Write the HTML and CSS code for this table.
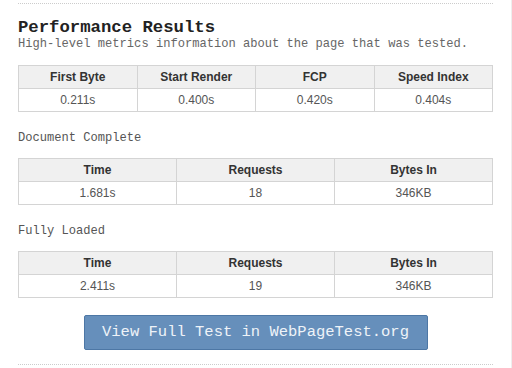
FILE: index.html
```html
<!DOCTYPE html>
<html lang="en">
<head>
    <meta charset="UTF-8">
    <meta name="viewport" content="width=device-width, initial-scale=1.0">
    <title>Performance Results</title>

    <link rel="stylesheet" href="styles.css">
</head>
<body>

    <div class="page">

        <hr class="rule">

        <h2 class="title">Performance Results</h2>
        <p class="subtitle">High-level metrics information about the page that was tested.</p>

        <table class="metrics">
            <tr>
                <th>First Byte</th>
                <th>Start Render</th>
                <th>FCP</th>
                <th>Speed Index</th>
            </tr>
            <tr>
                <td>0.211s</td>
                <td>0.400s</td>
                <td>0.420s</td>
                <td>0.404s</td>
            </tr>
        </table>

        <h3 class="label">Document Complete</h3>

        <table class="metrics">
            <tr>
                <th>Time</th>
                <th>Requests</th>
                <th>Bytes In</th>
            </tr>
            <tr>
                <td>1.681s</td>
                <td>18</td>
                <td>346KB</td>
            </tr>
        </table>

        <h3 class="label">Fully Loaded</h3>

        <table class="metrics">
            <tr>
                <th>Time</th>
                <th>Requests</th>
                <th>Bytes In</th>
            </tr>
            <tr>
                <td>2.411s</td>
                <td>19</td>
                <td>346KB</td>
            </tr>
        </table>

        <div class="actions">
            <a class="btn-full" href="#">View Full Test in WebPageTest.org</a>
        </div>

        <hr class="rule rule-bottom">

    </div>

</body>
</html>
```

FILE: styles.css
```css
*{
    margin: 0;
    padding: 0;
    box-sizing: border-box;
}

body{
    background: #fff;
    font-family: "Liberation Mono", "DejaVu Sans Mono", monospace;
}

.page{
    width: 512px;
    height: 368px;
    padding: 3px 18px 0 18px;
    border-right: 1px solid #eee;
    overflow: hidden;
}

.rule{
    border: none;
    border-top: 1px dotted #ccc;
}

.rule-bottom{
    margin-top: 14px;
}

.title{
    margin-top: 14px;
    font-size: 17.3px;
    line-height: 19px;
    font-weight: 700;
    color: #222;
}

.subtitle{
    font-size: 12.1px;
    line-height: 14px;
    color: #666;
}

.label{
    margin-top: 19px;
    font-size: 12.1px;
    line-height: 14px;
    font-weight: 400;
    color: #555;
}

.metrics{
    width: 100%;
    margin-top: 14px;
    border-collapse: collapse;
    table-layout: fixed;
    font-family: "Liberation Sans", Arial, sans-serif;
    font-size: 12px;
    line-height: 14px;
}

.label + .metrics{
    margin-top: 13px;
}

.metrics th, .metrics td{
    border: 1px solid #d4d4d4;
    padding: 4px;
    text-align: center;
}

.metrics th{
    background: #f0f0f0;
    color: #333;
    font-weight: 700;
}

.metrics td{
    color: #555;
}

.actions{
    margin-top: 17px;
    display: flex;
    justify-content: center;
}

.btn-full{
    display: block;
    width: 344px;
    height: 35px;
    line-height: 33px;
    text-align: center;
    font-size: 15.5px;
    color: #eef3f8;
    text-decoration: none;
    background: #668fbb;
    border: 1px solid #4d77a5;
    border-radius: 2px;
}
```
